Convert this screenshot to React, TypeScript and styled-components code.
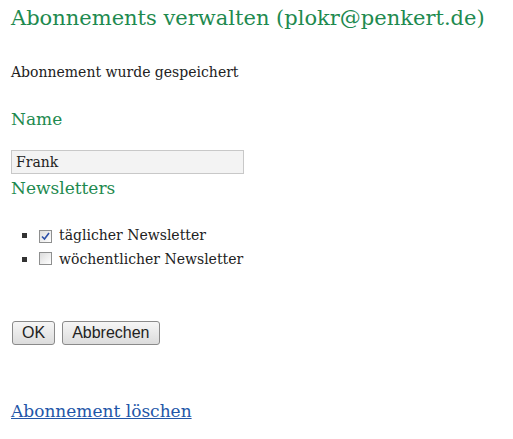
import styled, { createGlobalStyle } from "styled-components";

const GlobalStyle = createGlobalStyle`
  body {
    margin: 0;
    background: #ffffff;
    font-family: "DejaVu Serif", Georgia, serif;
    color: #222222;
  }
`;

const newsletters = [
  { id: "daily", label: "täglicher Newsletter", checked: true },
  { id: "weekly", label: "wöchentlicher Newsletter", checked: false },
];

function CheckBox({ checked }: { checked: boolean }) {
  return (
    <Box>
      {checked && (
        <svg width="9" height="9" viewBox="0 0 9 9">
          <path d="M1 4.5 L3.5 7 L8 1" fill="none" stroke="#2b4fa8" strokeWidth="1.6" />
        </svg>
      )}
    </Box>
  );
}

export default function App() {
  return (
    <>
      <GlobalStyle />
      <Page>
        <Title>Abonnements verwalten (plokr@penkert.de)</Title>
        <Message>Abonnement wurde gespeichert</Message>
        <Section>
          <Heading>Name</Heading>
          <TextInput defaultValue="Frank" />
        </Section>
        <Heading $top={2}>Newsletters</Heading>
        <List>
          {newsletters.map((n) => (
            <Item key={n.id}>
              <CheckBox checked={n.checked} />
              {n.label}
            </Item>
          ))}
        </List>
        <Buttons>
          <Button>OK</Button>
          <Button>Abbrechen</Button>
        </Buttons>
        <DeleteLink href="#">Abonnement löschen</DeleteLink>
      </Page>
    </>
  );
}

const Page = styled.div`
  padding: 0 11px;
  display: flex;
  flex-direction: column;
  align-items: flex-start;
`;

const Title = styled.h1`
  margin: 2px 0 0;
  font-size: 21px;
  font-weight: normal;
  line-height: 32px;
  color: #1e8a4f;
  white-space: nowrap;
`;

const Message = styled.p`
  margin: 28px 0 0;
  font-size: 14px;
  line-height: 20px;
`;

const Section = styled.div`
  display: flex;
  flex-direction: column;
  gap: 19px;
  margin-top: 25px;
`;

const Heading = styled.h2<{ $top?: number }>`
  margin: ${(p) => p.$top ?? 0}px 0 0;
  font-size: 17px;
  font-weight: normal;
  line-height: 24px;
  color: #1e8a4f;
`;

const TextInput = styled.input`
  box-sizing: border-box;
  width: 233px;
  height: 24px;
  padding: 0 4px;
  border: 1px solid #c8c8c8;
  background: #f3f3f3;
  font-family: "DejaVu Serif", Georgia, serif;
  font-size: 14px;
  color: #222222;
  outline: none;
`;

const List = styled.ul`
  margin: 23px 0 0;
  padding: 0;
  list-style: none;
`;

const Item = styled.li`
  font-size: 14px;
  line-height: 24px;
  color: #222222;

  &::before {
    content: "";
    display: inline-block;
    width: 5px;
    height: 5px;
    margin: 0 12px 0 11px;
    vertical-align: 2px;
    background: #333333;
  }
`;

const Box = styled.span`
  box-sizing: border-box;
  display: inline-flex;
  align-items: center;
  justify-content: center;
  width: 13px;
  height: 13px;
  margin-right: 7px;
  vertical-align: -1px;
  border: 1px solid #8e8f8f;
  background: linear-gradient(135deg, #dcdcdc, #ffffff);
`;

const Buttons = styled.div`
  display: flex;
  gap: 7px;
  margin-top: 50px;
  padding-left: 1px;
`;

const Button = styled.button`
  height: 24px;
  padding: 0 9px;
  border: 1px solid #8a8a8a;
  border-radius: 3px;
  background: linear-gradient(#f6f6f6, #dcdcdc);
  font-family: "Liberation Sans", Arial, sans-serif;
  font-size: 16px;
  color: #222222;
`;

const DeleteLink = styled.a`
  margin-top: 54px;
  font-size: 17px;
  line-height: 24px;
  color: #2256a8;
`;
